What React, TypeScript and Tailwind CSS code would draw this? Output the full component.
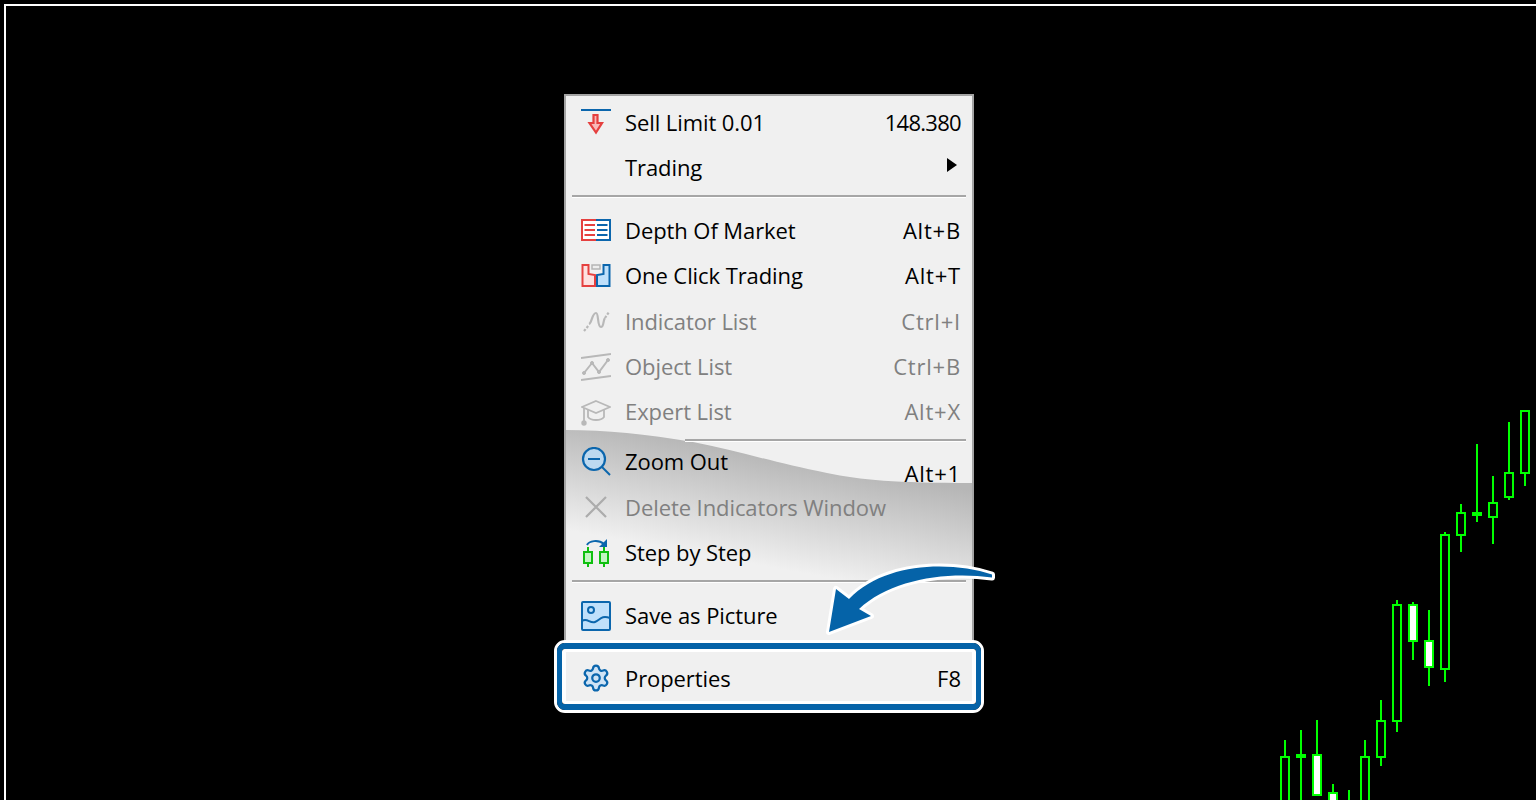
import { Settings } from "lucide-react";
import type { ReactNode } from "react";

const red = "#e5403f";
const blue = "#0b66ad";
const gray = "#b8b8b8";

function SellIcon() {
  return (
    <svg width="30" height="30" viewBox="0 0 30 30" fill="none">
      <rect x="0" y="2" width="30" height="2" fill={blue} />
      <path d="M12.500 8h4v8h4.500l-6 9.500-6.500-9.500h4z" fill="#f9b9b9" stroke={red} strokeWidth="2.200" />
    </svg>
  );
}

function DepthIcon() {
  return (
    <svg width="30" height="30" viewBox="0 0 30 30" fill="none">
      <path d="M15 4H1v20h14" stroke={red} strokeWidth="2" fill="#fff" />
      <path d="M15 4h14v20H15" stroke={blue} strokeWidth="2" fill="#fff" />
      <path d="M3.500 9H14M3.500 14H14M3.500 19H14" stroke={red} strokeWidth="2" />
      <path d="M16 9h10.500M16 14h10.500M16 19h10.500" stroke={blue} strokeWidth="2" />
    </svg>
  );
}

function OneClickIcon() {
  return (
    <svg width="30" height="30" viewBox="0 0 30 30" fill="none">
      <path d="M1.500 4h6v9l6.500 1v11H1.500z" fill="#fde0e0" stroke={red} strokeWidth="2" />
      <path d="M28.500 4h-6v9L16 14v11h12.500z" fill="#bfe0fb" stroke={blue} strokeWidth="2" />
      <rect x="11" y="4" width="8" height="4" fill="#eee" stroke="#b5b5b5" strokeWidth="1.500" />
    </svg>
  );
}

function IndicatorIcon() {
  return (
    <svg width="30" height="30" viewBox="0 0 30 30" fill="none" stroke={gray} strokeWidth="2.200">
      <path d="M3 25l5-6" strokeDasharray="2.500 1.500" />
      <path d="M8 18c3-1 3-11 7-11 3 0 1 14 5 14 3 0 2-7 4-9" />
      <path d="M24 12l4-6" strokeDasharray="2.500 1.500" />
    </svg>
  );
}

function ObjectIcon() {
  return (
    <svg width="30" height="30" viewBox="0 0 30 30" fill="none" stroke={gray}>
      <path d="M0 6l30-4M0 28l30-4" strokeWidth="1.800" />
      <path d="M3 21l8-10 7 9 9-12" strokeWidth="2" />
      <circle cx="3" cy="21" r="1.500" fill={gray} />
      <circle cx="11" cy="11" r="1.500" fill={gray} />
      <circle cx="18" cy="20" r="1.500" fill={gray} />
      <circle cx="27" cy="8" r="1.500" fill={gray} />
    </svg>
  );
}

function ExpertIcon() {
  return (
    <svg width="30" height="30" viewBox="0 0 30 30" fill="none" stroke={gray} strokeWidth="1.800">
      <path d="M15 4L29 10 15 16 1 10z" />
      <path d="M7 13v7c3 4 13 4 16 0v-7" />
      <path d="M3 11v13" />
      <circle cx="3" cy="26" r="1.800" fill={gray} />
    </svg>
  );
}

function ZoomIcon() {
  return (
    <svg width="30" height="30" viewBox="0 0 30 30" fill="none">
      <circle cx="13" cy="12" r="11" fill="#bcd9f0" stroke={blue} strokeWidth="2.200" />
      <path d="M7 12h12" stroke={blue} strokeWidth="2" />
      <path d="M21 20l8 8" stroke={blue} strokeWidth="2" />
    </svg>
  );
}

function DeleteIcon() {
  return (
    <svg width="30" height="30" viewBox="0 0 30 30" fill="none" stroke="#acacac" strokeWidth="2.200">
      <path d="M5 5l20 20M25 5L5 25" />
    </svg>
  );
}

function StepIcon() {
  return (
    <svg width="30" height="30" viewBox="0 0 30 30" fill="none">
      <path d="M6 7c2-4 11-6 17-1" stroke={blue} strokeWidth="2" />
      <path d="M26 1v8h-8z" fill={blue} />
      <path d="M7 9v20M23 9v20" stroke="#10c010" strokeWidth="2" />
      <rect x="3" y="14" width="8" height="11" fill="#c4f5c4" stroke="#10c010" strokeWidth="2" />
      <rect x="19" y="14" width="8" height="11" fill="#c4f5c4" stroke="#10c010" strokeWidth="2" />
    </svg>
  );
}

function PictureIcon() {
  return (
    <svg width="30" height="30" viewBox="0 0 30 30" fill="none">
      <rect x="1" y="1" width="28" height="28" rx="1" fill="#bfe0fb" stroke={blue} strokeWidth="2" />
      <circle cx="10" cy="9" r="3" stroke={blue} strokeWidth="2" />
      <path d="M1 20c5-4 8 3 13 1 5-2 6-7 15-4" stroke={blue} strokeWidth="2" />
    </svg>
  );
}

function Row({ icon, label, right, muted, alt, rightClass = "" }: { icon?: ReactNode; label: string; right?: ReactNode; muted?: boolean; alt?: boolean; rightClass?: string }) {
  return (
    <div className={`flex h-[45.33px] items-center pl-[15px] pr-[11px] ${muted ? "text-[#808080]" : "text-black"}`}>
      <div className="flex h-[30px] w-[30px] shrink-0 items-center justify-center">{icon}</div>
      <span className="ml-[14px] flex-1 tracking-[-0.08px]">{label}</span>
      {right && <span className={`${rightClass} ${alt ? "translate-y-3" : ""}`}>{right}</span>}
    </div>
  );
}

function Separator() {
  return (
    <div className="h-[17.67px] px-[6px] pt-[4.500px]">
      <div className="h-[3px] border-t-2 border-b border-t-[#a6a6a6] border-b-white" />
    </div>
  );
}

// wick runs y1 to y2, body runs top to bottom, up candles are hollow
const candles = [
  { x: 1285, y1: 740, y2: 800, top: 756, bottom: 804, up: true },
  { x: 1301, y1: 730, y2: 800, top: 754, bottom: 758, up: true },
  { x: 1317, y1: 720, y2: 796, top: 754, bottom: 796, up: false },
  { x: 1333, y1: 784, y2: 800, top: 792, bottom: 804, up: false },
  { x: 1349, y1: 790, y2: 800, top: 0, bottom: 0, up: true },
  { x: 1365, y1: 740, y2: 800, top: 756, bottom: 804, up: true },
  { x: 1381, y1: 700, y2: 766, top: 720, bottom: 758, up: true },
  { x: 1397, y1: 600, y2: 732, top: 604, bottom: 722, up: true },
  { x: 1413, y1: 602, y2: 660, top: 604, bottom: 642, up: false },
  { x: 1429, y1: 610, y2: 686, top: 640, bottom: 668, up: false },
  { x: 1445, y1: 532, y2: 682, top: 534, bottom: 670, up: true },
  { x: 1461, y1: 504, y2: 552, top: 512, bottom: 536, up: true },
  { x: 1477, y1: 444, y2: 522, top: 512, bottom: 516, up: true },
  { x: 1493, y1: 476, y2: 544, top: 502, bottom: 518, up: true },
  { x: 1509, y1: 422, y2: 500, top: 472, bottom: 498, up: true },
  { x: 1525, y1: 410, y2: 486, top: 410, bottom: 474, up: true },
];

function Chart() {
  return (
    <svg className="absolute top-0 left-0" width="1536" height="800" viewBox="0 0 1536 800" shapeRendering="crispEdges">
      {candles.map((c) => (
        <g key={c.x}>
          <rect x={c.x - 1} y={c.y1} width="2" height={c.y2 - c.y1} fill="#00ff00" />
          {c.bottom > 0 && (
            <rect
              x={c.x - 4}
              y={c.top + 1}
              width="8"
              height={c.bottom - c.top - 2}
              fill={c.up ? "#000" : "#fff"}
              stroke="#00ff00"
              strokeWidth="2"
            />
          )}
        </g>
      ))}
    </svg>
  );
}

const shortcut = "tracking-[0.8px]";

export default function App() {
  return (
    <div className="relative h-[800px] w-[1536px] overflow-hidden bg-black pt-[94px] pl-[564px] font-['Open_Sans',sans-serif] text-[22px]">
      <div className="absolute top-[4px] right-0 left-[4px] h-[2px] bg-white" />
      <div className="absolute top-[4px] bottom-0 left-[4px] w-[2px] bg-white" />
      <Chart />

      <div className="relative w-[410px] border-2 border-[#a4a4a4] bg-[#f0f0f0] pt-[3.600px]">
        {/* torn paper look across the middle of the menu */}
        <svg className="absolute top-[334px] left-0" width="406" height="150" viewBox="0 0 406 150">
          <defs>
            <linearGradient id="fold" gradientUnits="userSpaceOnUse" x1="240" y1="30" x2="220" y2="140">
              <stop offset="0" stopColor="#b6b6b6" />
              <stop offset="1" stopColor="#f0f0f0" />
            </linearGradient>
          </defs>
          <path d="M0 0C40 0 80 4 127 12 170 20 205 32 261 43 295 50 330 53 406 53V150H0z" fill="url(#fold)" />
        </svg>

        <div className="relative">
          <Row icon={<SellIcon />} label="Sell Limit 0.01" right="148.380" rightClass="tracking-[-0.7px]" />
          <Row
            label="Trading"
            right={
              <svg className="mr-[4px] mb-[6px]" width="10" height="14" viewBox="0 0 10 14">
                <path d="M0 0l10 7-10 7z" fill="#000" />
              </svg>
            }
          />
          <Separator />
          <Row icon={<DepthIcon />} label="Depth Of Market" right="Alt+B" rightClass={shortcut} />
          <Row icon={<OneClickIcon />} label="One Click Trading" right="Alt+T" rightClass={shortcut} />
          <Row icon={<IndicatorIcon />} label="Indicator List" right="Ctrl+I" rightClass={shortcut} muted />
          <Row icon={<ObjectIcon />} label="Object List" right="Ctrl+B" rightClass={shortcut} muted />
          <Row icon={<ExpertIcon />} label="Expert List" right="Alt+X" rightClass={shortcut} muted />
          <div className="mt-[4.670px] mr-[6px] -mb-[3px] ml-[119px] h-[3px] border-t-2 border-b border-t-[#a6a6a6] border-b-white" />
          <Row icon={<ZoomIcon />} label="Zoom Out" right="Alt+1" rightClass={shortcut} alt />
          <Row icon={<DeleteIcon />} label="Delete Indicators Window" muted />
          <Row icon={<StepIcon />} label="Step by Step" />
          <Separator />
          <Row icon={<PictureIcon />} label="Save as Picture" />
          <div className="h-[17.670px]" />
          <Row icon={<Settings size={30} color={blue} fill="#cfe3f5" strokeWidth={1.8} />} label="Properties" right="F8" />
        </div>

        {/* highlight round the Properties row */}
        <div className="absolute top-[544px] -right-[12px] -bottom-[11.400px] -left-[12px] rounded-[11px] border-[3px] border-white">
          <div className="h-full rounded-[8px] border-x-[5px] border-y-[6px] border-[#0563a8]">
            <div className="h-full rounded-[3px] border-x-4 border-y-[3px] border-white" />
          </div>
        </div>

        {/* arrow pointing at Properties */}
        <svg className="absolute top-[462px] left-[260px]" width="180" height="90" viewBox="826 556 180 90">
          <path
            d="M992 572.500C950 559 885 560 849 597L836 587 829 630 871 614 859 607C890 578 945 569 992 575.500z"
            fill="#0563a8"
            stroke="#fff"
            strokeWidth="6"
            strokeLinejoin="round"
            paintOrder="stroke"
          />
        </svg>
      </div>
    </div>
  );
}
